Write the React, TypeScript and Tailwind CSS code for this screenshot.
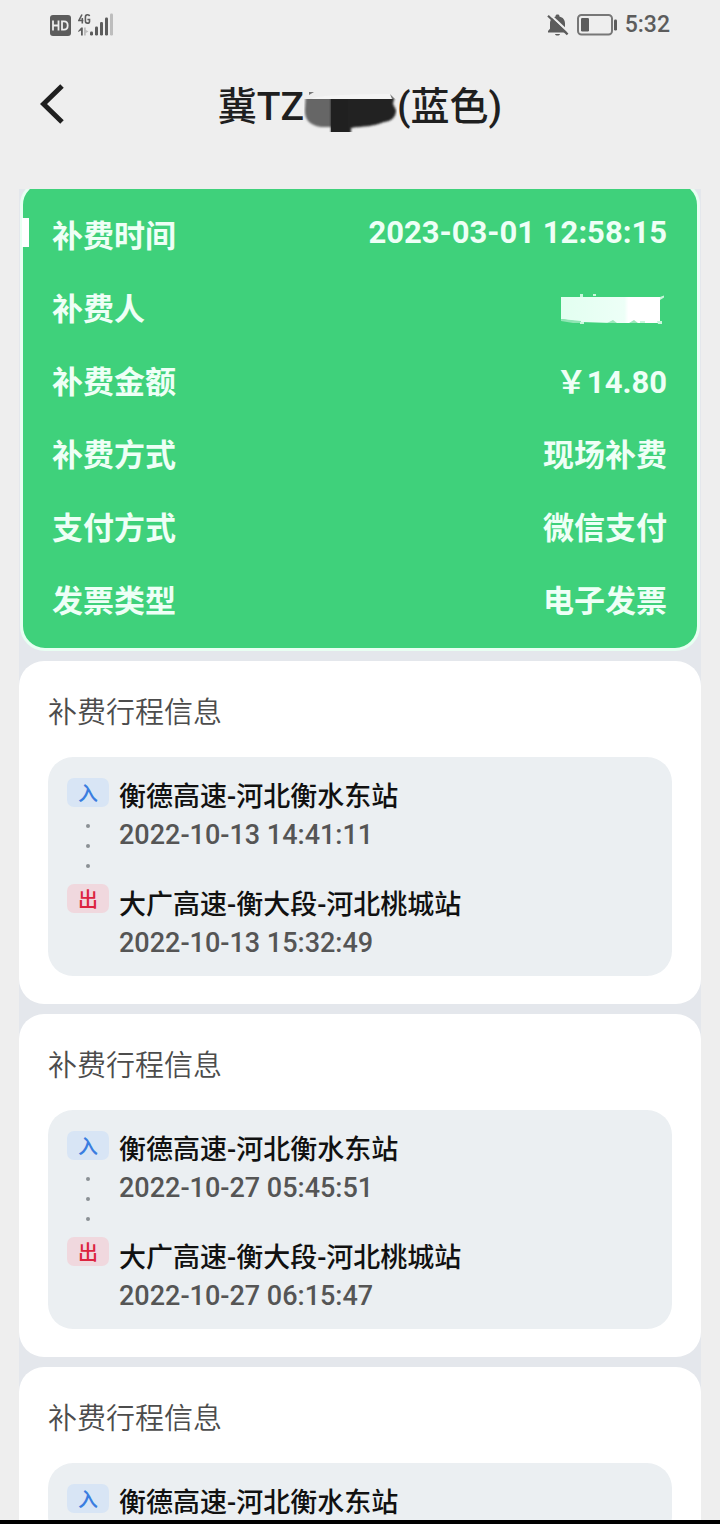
const fonts = "font-[Roboto,'Noto_Sans_CJK_SC',sans-serif]";

type Stop = { place: string; time?: string };
type Trip = { entry: Stop; exit?: Stop };

const trips: Trip[] = [
  {
    entry: { place: "衡德高速-河北衡水东站", time: "2022-10-13 14:41:11" },
    exit: { place: "大广高速-衡大段-河北桃城站", time: "2022-10-13 15:32:49" },
  },
  {
    entry: { place: "衡德高速-河北衡水东站", time: "2022-10-27 05:45:51" },
    exit: { place: "大广高速-衡大段-河北桃城站", time: "2022-10-27 06:15:47" },
  },
  {
    entry: { place: "衡德高速-河北衡水东站" },
  },
];

function StatusBar() {
  return (
    <div className="flex h-[50px] shrink-0 items-center justify-between px-[50px] text-[#5c5c5c]">
      <div className="flex items-center gap-[7px]">
        <svg width="21" height="21" viewBox="0 0 21 21" aria-hidden="true">
          <rect width="21" height="21" rx="3" fill="#5c5c5c" />
          <path
            d="M3 5.5V15.5M8.5 5.5V15.5M3 10.5H8.5M12 6.3V14.7H14C16.6 14.7 17.7 13 17.7 10.5S16.6 6.3 14 6.3Z"
            fill="none"
            stroke="#eee"
            strokeWidth="1.8"
          />
        </svg>
        <svg width="36" height="24" viewBox="0 0 36 24" aria-hidden="true">
          <path
            d="M4 1.5L0.9 7.5H5.4M4.3 5V10.5M11.5 3.2C11.3 1.2 7.4 1 7.4 4V8C7.4 11 11.5 10.6 11.5 8.4V6.5H9.4"
            fill="none"
            stroke="#5c5c5c"
            strokeWidth="1.6"
          />
          <path d="M0.2 18L3.2 14.5H4.8V22.5H3V17.5L0.2 19Z" fill="#5c5c5c" />
          <path d="M6 14.5H7.8V17L10.5 18.5L7.8 20V22.5H6Z" fill="#bdbdbd" />
          <rect x="12" y="18.5" width="3" height="4" rx="1.2" fill="#5c5c5c" />
          <rect x="17" y="13.5" width="3" height="9" rx="1.2" fill="#5c5c5c" />
          <rect x="22" y="9" width="3" height="13.5" rx="1.2" fill="#5c5c5c" />
          <rect x="27" y="4.5" width="3" height="18" rx="1.2" fill="#5c5c5c" />
          <rect x="32" y="0.5" width="3" height="22" rx="1.2" fill="#bdbdbd" />
        </svg>
      </div>
      <div className="flex items-center gap-[8px]">
        <svg width="22" height="22" viewBox="0 0 22 22" aria-hidden="true">
          <path
            d="M1 18.5V17L3 14.8V9.5C3 5.8 5 3.2 8.6 2.4V1.8C8.6 0 12.4 0 12.4 1.8V2.4C16 3.2 18 5.8 18 9.5V14.8L20 17V18.5Z"
            fill="#5c5c5c"
          />
          <path d="M8 20H13C12.6 22 8.4 22 8 20Z" fill="#5c5c5c" />
          <path d="M2.5 0.2L21.8 18.4" stroke="#eee" strokeWidth="2.2" />
          <path d="M1 1.8L20.6 20.4" stroke="#5c5c5c" strokeWidth="2.2" />
        </svg>
        <svg width="40" height="22" viewBox="0 0 40 22" aria-hidden="true">
          <rect x="1" y="1" width="34" height="19.5" rx="3.5" fill="none" stroke="#777" strokeWidth="2" />
          <rect x="4" y="4" width="8" height="13.5" rx="1.2" fill="#5c5c5c" />
          <rect x="37" y="5.5" width="3" height="11" rx="1.2" fill="#5c5c5c" />
        </svg>
        <time className="text-[23px] leading-[30px] font-medium">5:32</time>
      </div>
    </div>
  );
}

function Header() {
  return (
    <header className="grid h-[139px] shrink-0 grid-cols-[48px_1fr_48px] items-start px-[28px] pt-[26px] text-[#1f1f1f]">
      <button type="button" aria-label="返回" className="flex h-[56px] w-[48px] items-center justify-center">
        <svg width="24" height="40" viewBox="0 0 24 40" aria-hidden="true">
          <path d="M22 2L3.5 20L22 38" fill="none" stroke="currentColor" strokeWidth="5" />
        </svg>
      </button>
      <h1 className="flex items-center justify-center text-[39px] leading-[62px] font-medium">
        冀TZ
        <svg className="mt-[8px] h-[42px] w-[93px]" viewBox="0 0 93 42" aria-hidden="true">
          <defs>
            <filter id="smudge" x="-20%" y="-30%" width="140%" height="160%">
              <feGaussianBlur stdDeviation="1.2" />
            </filter>
            <clipPath id="smudge-top">
              <rect x="0" y="9" width="93" height="33" />
            </clipPath>
          </defs>
          <path d="M8 9C12 4 78 4 87 4L89 9Z" fill="#f4f4f4" />
          <g clipPath="url(#smudge-top)">
            <path d="M2 0H30V37H17C5 35 0 29 1 18Z" fill="#666" filter="url(#smudge)" />
            <path d="M27 0H92L89 14L92 20C92 27 88 31 80 32C69 37 59 36 47 38V46H27Z" fill="#202020" filter="url(#smudge)" />
            <rect x="27" y="9" width="17" height="33" fill="#202020" />
          </g>
          <path d="M5 2H10L5 5ZM86 4L91 9H88Z" fill="#777" />
        </svg>
        (蓝色)
      </h1>
    </header>
  );
}

function MaskedName() {
  return (
    <svg className="mt-[7px] mr-[3px] h-[31px] w-[103px]" viewBox="0 0 103 31" role="img" aria-label="已隐藏">
      <defs>
        <linearGradient id="mask-fade" x1="0" x2="1" y1="0" y2="0">
          <stop offset="0" stopColor="#e2fff0" />
          <stop offset="0.64" stopColor="#edfff7" />
          <stop offset="0.68" stopColor="#ffffff" />
          <stop offset="1" stopColor="#ffffff" />
        </linearGradient>
      </defs>
      <path d="M0 3H99V29H50L20 28L0 25Z" fill="url(#mask-fade)" />
      <path d="M0 25L20 27V29H12L0 27Z" fill="#8fe5b3" />
      <path d="M19 0H22V3H19ZM32 0H35V2H32ZM99 3L104 1V3L99 6ZM19 28H23V30H19ZM79 27H84V29H79ZM96 27H101V30H97Z" fill="#c9f7dc" />
      <path d="M46 29L52 26L56 29ZM68 29L73 26L77 29Z" fill="#9be8bb" />
    </svg>
  );
}

function PaymentCard() {
  const label = "leading-[45px]";
  return (
    <section className="relative -mt-[9px] mx-px rounded-[25px] border-[3px] border-[#e8fff2] bg-[#3fd17b] pt-[31px] pr-[30px] pb-[24px] pl-[29px] text-[31px] font-bold text-[#eefff6]">
      <span className="absolute top-[35px] -left-px h-[29px] w-[7px] bg-white" />
      <dl className="flex flex-col gap-[28px]">
        <div className="flex items-start justify-between">
          <dt className={label}>补费时间</dt>
          <dd className="leading-[38px]">2023-03-01 12:58:15</dd>
        </div>
        <div className="flex items-start justify-between">
          <dt className={label}>补费人</dt>
          <dd>
            <MaskedName />
          </dd>
        </div>
        {[
          ["补费金额", "￥14.80"],
          ["补费方式", "现场补费"],
          ["支付方式", "微信支付"],
          ["发票类型", "电子发票"],
        ].map(([name, value]) => (
          <div key={name} className="flex items-start justify-between">
            <dt className={label}>{name}</dt>
            <dd className={label}>{value}</dd>
          </div>
        ))}
      </dl>
    </section>
  );
}

function TripCard({ trip }: { trip: Trip }) {
  const badge = "flex h-[29px] w-[42px] items-center justify-center rounded-[7px] pt-[3px] text-[20px] leading-[26px] font-medium";
  return (
    <section className="rounded-[25px] bg-white px-[29px] pt-[28px] pb-[28px]">
      <h2 className="text-[29px] leading-[48px] font-[350] text-[#4c4c4c]">补费行程信息</h2>
      <div className="mt-[20px] grid grid-cols-[42px_1fr] gap-x-[10px] rounded-[25px] bg-[#ebeff2] px-[19px] pt-[18px] pb-[17px]">
        <div className="flex flex-col pt-[3px]">
          <span className={`${badge} bg-[#d8e5f5] text-[#3a7de0]`}>入</span>
          {trip.exit && (
            <>
              <span className="flex h-[77px] flex-col items-center justify-center gap-[16px]">
                <i className="size-[4px] rounded-full bg-[#8b9095]" />
                <i className="size-[4px] rounded-full bg-[#8b9095]" />
                <i className="size-[4px] rounded-full bg-[#8b9095]" />
              </span>
              <span className={`${badge} bg-[#f0d8de] text-[#dc2440]`}>出</span>
            </>
          )}
        </div>
        <div className="flex flex-col gap-[32px] text-[27px] font-medium text-[#555]">
          {[trip.entry, trip.exit].map(
            (stop, i) =>
              stop && (
                <div key={i}>
                  <p className="leading-[44px] text-[#111]">{stop.place}</p>
                  {stop.time && <p className="leading-[32px]">{stop.time}</p>}
                </div>
              ),
          )}
        </div>
      </div>
    </section>
  );
}

export default function App() {
  return (
    <div className={`flex h-screen flex-col border-b-4 border-black bg-[#eeeeee] ${fonts}`}>
      <StatusBar />
      <Header />
      <main className="mx-[19px] flex min-h-0 flex-1 flex-col gap-[10px] overflow-y-auto bg-[#e4e7ec] [scrollbar-width:none] *:shrink-0">
        <PaymentCard />
        {trips.map((trip, i) => (
          <TripCard key={i} trip={trip} />
        ))}
      </main>
    </div>
  );
}
